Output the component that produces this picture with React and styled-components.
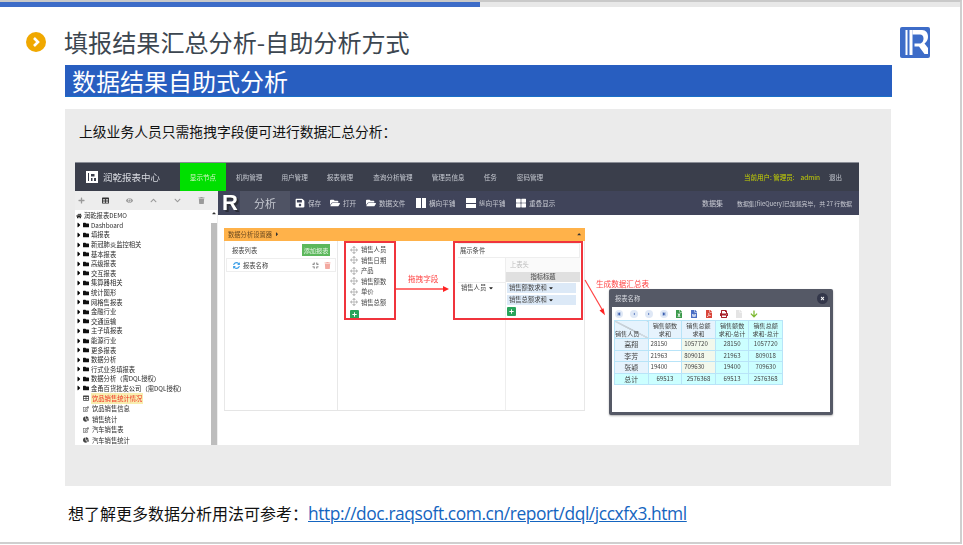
import React from "react";
import styled, { createGlobalStyle } from "styled-components";
import {
  FaCaretRight, FaCaretDown, FaCaretUp, FaFolder, FaFolderOpen, FaSave, FaHome, FaChartPie,
  FaPlus, FaEye, FaTrash, FaChevronUp, FaChevronDown, FaArrowsAlt, FaRegEdit, FaTable,
  FaSyncAlt, FaCompress, FaTimes, FaArrowDown, FaFileExcel, FaFileWord, FaFilePdf, FaPrint, FaFile,
  FaStepBackward, FaCaretLeft, FaStepForward, FaThLarge,
} from "react-icons/fa";

const CJK = `"Noto Sans CJK SC", "Liberation Sans", sans-serif`;

const navItems = [
  ["机构管理", 19.5], ["用户管理", 19], ["报表管理", 19], ["查询分析管理", 20],
  ["管理员信息", 19], ["任务", 19], ["密码管理", 20],
];

const treeFolders = [
  "Dashboard", "填报表", "新冠肺炎监控相关", "基本报表", "高级报表", "交互报表", "集算器相关",
  "统计图形", "网格售报表", "金融行业", "交通运输", "主子填报表", "能源行业", "更多报表",
  "数据分析", "行式业务填报表", "数据分析（需DQL授权）", "金甬百货批发公司（需DQL授权）",
];

const treeLeaves = [
  [FaTable, "饮品销售统计情况", true],
  [FaRegEdit, "饮品销售信息", false],
  [FaChartPie, "销售统计", false],
  [FaRegEdit, "汽车销售表", false],
  [FaChartPie, "汽车销售统计", false],
];

const fields = ["销售人员", "销售日期", "产品", "销售额数", "单价", "销售总额"];

const tableRows = [
  ["高翔", "28150", "1057720", "28150", "1057720"],
  ["李芳", "21963", "809018", "21963", "809018"],
  ["张颖", "19400", "709630", "19400", "709630"],
];

export default function App() {
  return (
    <>
      <GlobalStyle />
      <Slide>
        <Progress>
          <ProgressFill />
        </Progress>
        <Header>
          <Bullet>
            <svg width="10" height="10" viewBox="0 0 10 10">
              <path d="M3 1l4 4-4 4" fill="none" stroke="#fff" strokeWidth="2.6" />
            </svg>
          </Bullet>
          <Title>填报结果汇总分析-自助分析方式</Title>
          <BrandLogo />
        </Header>
        <Banner>数据结果自助式分析</Banner>
        <GrayPanel>
          <Lead>上级业务人员只需拖拽字段便可进行数据汇总分析：</Lead>
          <AppShot>
            <TopBar>
              <Brand>
                <MiniLogo />
                润乾报表中心
              </Brand>
              <GreenTab>显示节点</GreenTab>
              {navItems.map(([label, gap]) => (
                <NavItem key={label} $gap={gap}>{label}</NavItem>
              ))}
              <UserInfo>
                <span>当前用户: 管理员:</span>
                <span>admin</span>
                <Logout>退出</Logout>
              </UserInfo>
            </TopBar>
            <AppBody>
              <Sidebar>
                <SideTools>
                  <FaPlus />
                  <FaTable />
                  <FaEye />
                  <FaChevronUp />
                  <FaChevronDown />
                  <FaTrash />
                </SideTools>
                <Tree>
                  <TreeRoot><FaHome />润乾报表DEMO</TreeRoot>
                  {treeFolders.map((name) => (
                    <TreeRow key={name}>
                      <FaCaretRight />
                      <FaFolder />
                      <span>{name}</span>
                    </TreeRow>
                  ))}
                  {treeLeaves.map(([Icon, name, active]) => (
                    <LeafRow key={name}>
                      <Icon />
                      <LeafLabel $active={active}>{name}</LeafLabel>
                    </LeafRow>
                  ))}
                </Tree>
                <Scrollbar><FaCaretUp /></Scrollbar>
              </Sidebar>
              <Workspace>
                <ToolBar>
                  <RMark>R</RMark>
                  <ToolTitle>分析</ToolTitle>
                  <Tool $w={35}><FaSave />保存</Tool>
                  <Tool $w={36}><FaFolderOpen />打开</Tool>
                  <Tool $w={50}><FaFolderOpen />数据文件</Tool>
                  <Tool $w={50}><Split />横向平铺</Tool>
                  <Tool $w={50}><Split $rows />纵向平铺</Tool>
                  <Tool $w={50}><FaThLarge />重叠显示</Tool>
                  <ToolRight>
                    <DatasetLabel>数据集</DatasetLabel>
                    <span>数据集[fileQuery]已加载完毕，共 27 行数据</span>
                  </ToolRight>
                </ToolBar>
                <Canvas>
                  <Panel>
                    <PanelHead>
                      <span>数据分析设置器</span>
                      <FaCaretRight />
                      <CollapseCaret><FaCaretUp /></CollapseCaret>
                    </PanelHead>
                    <PanelBody>
                      <ReportColumn>
                        <ReportHead>
                          <span>报表列表</span>
                          <AddButton>添加报表</AddButton>
                        </ReportHead>
                        <ReportRow>
                          <FaSyncAlt color="#3ea0e8" />
                          <span>报表名称</span>
                          <ReportIcons>
                            <FaCompress color="#666" />
                            <FaTrash color="#f3a9a0" />
                          </ReportIcons>
                        </ReportRow>
                      </ReportColumn>
                      <FieldColumn>
                        {fields.map((f) => (
                          <FieldRow key={f}>
                            <FaArrowsAlt />
                            {f}
                          </FieldRow>
                        ))}
                        <PlusButton><FaPlus /></PlusButton>
                      </FieldColumn>
                      <ConditionColumn>
                        <CondHead>展示条件</CondHead>
                        <CondGrid>
                          <CondCell />
                          <CondHeader>上表头</CondHeader>
                          <CondCell />
                          <CondMetric>指标标题</CondMetric>
                          <CondRowField>销售人员 <FaCaretDown /></CondRowField>
                          <CondValues>
                            <Chip>销售额数求和 <FaCaretDown /></Chip>
                            <Chip>销售总额求和 <FaCaretDown /></Chip>
                            <PlusButton><FaPlus /></PlusButton>
                          </CondValues>
                        </CondGrid>
                      </ConditionColumn>
                    </PanelBody>
                  </Panel>

                  <Callout $x={190} $y={59}>拖拽字段</Callout>
                  <Callout $x={378} $y={64}>生成数据汇总表</Callout>
                  <Arrows width="641" height="230" viewBox="0 0 641 230">
                    <path d="M178 74L226 74" stroke="#f44" strokeWidth="1.4" fill="none" />
                    <path d="M225 71l6 3-6 3z" fill="#f22" />
                    <path d="M367 65L385 96" stroke="#f44" strokeWidth="1.2" fill="none" />
                    <path d="M381.500 95.500l4-2.300 1.500 7z" fill="#f22" />
                  </Arrows>
                  <RedFrame $x={126} $w={52} />
                  <RedFrame $x={235} $w={130} />

                  <Modal>
                    <ModalHead>
                      报表名称
                      <CloseBtn><FaTimes /></CloseBtn>
                    </ModalHead>
                    <ModalInner>
                      <ModalTools>
                        <Pager><FaStepBackward /></Pager>
                        <Pager><FaCaretLeft /></Pager>
                        <Pager><FaCaretRight /></Pager>
                        <Pager><FaStepForward /></Pager>
                        <FaFileExcel color="#3c9a4b" />
                        <FaFileWord color="#4a6fc4" />
                        <FaFilePdf color="#d9453a" />
                        <FaPrint color="#a8222a" />
                        <FaFile color="#e4e4e4" />
                        <FaArrowDown color="#7cb82f" />
                      </ModalTools>
                      <ReportTable>
                        <thead>
                          <tr>
                            <CornerCell>销售人员</CornerCell>
                            <HeadCell>销售额数<br />求和</HeadCell>
                            <HeadCell>销售总额<br />求和</HeadCell>
                            <TotalHead>销售额数<br />求和-总计</TotalHead>
                            <TotalHead>销售总额<br />求和-总计</TotalHead>
                          </tr>
                        </thead>
                        <tbody>
                          {tableRows.map(([name, a, b, c, d]) => (
                            <tr key={name}>
                              <NameCell>{name}</NameCell>
                              <DataCell>{a}</DataCell>
                              <DataCell $tint>{b}</DataCell>
                              <TotalCell>{c}</TotalCell>
                              <TotalCell>{d}</TotalCell>
                            </tr>
                          ))}
                          <tr>
                            <GrandName>总计</GrandName>
                            <TotalCell>69513</TotalCell>
                            <TotalCell>2576368</TotalCell>
                            <TotalCell>69513</TotalCell>
                            <TotalCell>2576368</TotalCell>
                          </tr>
                        </tbody>
                      </ReportTable>
                    </ModalInner>
                  </Modal>
                </Canvas>
              </Workspace>
            </AppBody>
          </AppShot>
        </GrayPanel>
        <Footer>
          想了解更多数据分析用法可参考：
          <DocLink href="#">http://doc.raqsoft.com.cn/report/dql/jccxfx3.html</DocLink>
        </Footer>
      </Slide>
    </>
  );
}

function BrandLogo() {
  return (
    <svg width="30" height="31" viewBox="0 0 30 31" style={{ flex: "none" }}>
      <rect width="30" height="31" rx="2" fill="#3d6cc8" />
      <path d="M5.500 3H7.500V28H5.500zM9.500 3H12.500V28H9.500z" fill="#fff" />
      <path d="M12.500 3H22C26 3 28 6 28 10C28 13 26.500 15 24.500 16.500L28 21V27H24.500L19 19.500H14.500V16.500H20C22 16.500 23.500 14 23.500 11.500C23.500 9 22 7.500 20 7.500H12.500z" fill="#fff" />
    </svg>
  );
}

function MiniLogo() {
  return (
    <svg width="12" height="12" viewBox="0 0 12 12" style={{ flex: "none" }}>
      <path d="M0 0h12v12H0z" fill="#fff" />
      <path d="M2 2h1v8H2zM5 3h3.500v2.500H5zM5 7h1.500v3H5zM8 7h2v3H8z" fill="#3a3e4b" />
    </svg>
  );
}

// Global
const GlobalStyle = createGlobalStyle`
  html, body {
    margin: 0;
    background: #fff;
  }
`;

const Slide = styled.div`
  box-sizing: border-box;
  width: 962px;
  height: 544px;
  border-top: 2px solid #c9c9c9;
  border-right: 2px solid #cfcfcf;
  border-bottom: 2px solid #cfcfcf;
  background: #fff;
  font-family: ${CJK};
  overflow: hidden;
`;

const Progress = styled.div`
  height: 5px;
  background: #e8e8e8;
`;

const ProgressFill = styled.div`
  width: 480px;
  height: 100%;
  background: #3d6cc8;
`;

const Header = styled.div`
  display: flex;
  align-items: center;
  height: 32px;
  margin-top: 19px;
  padding: 0 30px 0 26px;
`;

const Bullet = styled.div`
  display: flex;
  align-items: center;
  justify-content: center;
  width: 20px;
  height: 20px;
  border-radius: 50%;
  background: #f0a800;
`;

const Title = styled.h1`
  flex: 1;
  margin: 0 0 0 18px;
  color: #3c4650;
  font-size: 24.100px;
  font-weight: 400;
  line-height: 32px;
`;

const Banner = styled.div`
  width: 827px;
  height: 32px;
  margin: 7px 0 0 65px;
  padding-left: 7px;
  box-sizing: border-box;
  background: #285ec0;
  border-bottom: 1px solid #1a70c8;
  color: #fff;
  font-size: 24px;
  line-height: 31px;
`;

const GrayPanel = styled.div`
  box-sizing: border-box;
  width: 826px;
  height: 377px;
  margin: 12px 0 0 65px;
  padding: 12px 0 0 10px;
  background: #ebebeb;
`;

const Lead = styled.p`
  height: 20px;
  margin: 0 0 21px 4px;
  color: #111;
  font-size: 13.800px;
  line-height: 20px;
`;

const Footer = styled.div`
  display: flex;
  align-items: center;
  height: 24px;
  margin: 15px 0 0 68px;
  color: #111;
  font-size: 16px;
`;

const DocLink = styled.a`
  color: #1565c0;
  font-family: "Open Sans", sans-serif;
  font-size: 17.400px;
  letter-spacing: -0.42px;
`;

// Embedded screenshot of the report app
const AppShot = styled.div`
  display: flex;
  flex-direction: column;
  width: 784px;
  height: 283px;
  background: #fff;
  filter: blur(0.35px);
  overflow: hidden;
`;

const TopBar = styled.div`
  display: flex;
  align-items: center;
  flex: none;
  height: 29px;
  border-top: 1px solid #8a8d96;
  box-sizing: border-box;
  background: #3a3e4b;
  color: #c5c8d0;
  font-size: 6.600px;
`;

const Brand = styled.div`
  display: flex;
  align-items: center;
  gap: 5px;
  width: 105px;
  height: 100%;
  padding-left: 11px;
  box-sizing: border-box;
  color: #d8dae0;
  font-size: 9.500px;
`;

const GreenTab = styled.div`
  display: flex;
  align-items: center;
  justify-content: center;
  width: 46px;
  height: 100%;
  background: #00e000;
  color: #d8f5c8;
`;

const NavItem = styled.span`
  margin-left: ${(p) => p.$gap}px;
  white-space: nowrap;
  &:first-of-type {
    margin-left: 10px;
  }
`;

const UserInfo = styled.div`
  display: flex;
  align-items: center;
  gap: 6px;
  margin-left: auto;
  padding-right: 17px;
  color: #c8d400;
  font-size: 6.500px;
`;

const Logout = styled.span`
  margin-left: 3px;
  color: #c5c8d0;
`;

const AppBody = styled.div`
  display: flex;
  flex: 1;
  min-height: 0;
`;

const Sidebar = styled.div`
  position: relative;
  width: 143px;
  flex: none;
  border-right: 1px solid #eee;
  box-sizing: border-box;
`;

const SideTools = styled.div`
  display: flex;
  align-items: center;
  justify-content: space-between;
  height: 19px;
  padding: 0 12px 0 3px;
  background: #ededed;
  color: #9a9a9a;
  font-size: 7px;
  svg:nth-child(2) {
    color: #333;
  }
`;

const Tree = styled.div`
  padding: 0 0 0 1px;
  color: #2a2a2a;
  font-size: 6.300px;
`;

const TreeRoot = styled.div`
  display: flex;
  align-items: center;
  gap: 2px;
  height: 9.600px;
  margin-top: 1px;
  svg {
    font-size: 6px;
    color: #222;
  }
`;

const TreeRow = styled.div`
  display: flex;
  align-items: center;
  gap: 2px;
  height: 9.600px;
  margin-left: -1px;
  white-space: nowrap;
  svg {
    font-size: 6px;
    color: #111;
  }
  svg:first-child {
    font-size: 8px;
    color: #000;
    margin-right: -2px;
  }
`;

const LeafRow = styled.div`
  display: flex;
  align-items: center;
  gap: 2px;
  height: 10.400px;
  padding-left: 7px;
  white-space: nowrap;
  svg {
    font-size: 6px;
    color: #444;
  }
`;

const LeafLabel = styled.span`
  padding: 1px 1px;
  background: ${(p) => (p.$active ? "#f8eeb0" : "transparent")};
  color: ${(p) => (p.$active ? "#f03020" : "inherit")};
`;

const Scrollbar = styled.div`
  position: absolute;
  top: 19px;
  right: 0;
  bottom: 0;
  width: 6px;
  background: linear-gradient(#fff 13px, #bdbdbd 13px);
  color: #333;
  font-size: 6px;
  line-height: 8px;
  text-align: center;
`;

const Workspace = styled.div`
  display: flex;
  flex: 1;
  flex-direction: column;
  min-width: 0;
`;

const ToolBar = styled.div`
  display: flex;
  align-items: center;
  flex: none;
  height: 24px;
  background: #40445a;
  color: #c8cad2;
  font-size: 6.600px;
`;

const RMark = styled.div`
  width: 22px;
  height: 100%;
  padding-left: 4px;
  box-sizing: border-box;
  color: #fff;
  font-family: "Liberation Sans", sans-serif;
  font-size: 22px;
  font-weight: 700;
  line-height: 24px;
  text-shadow: 2px 2px 0 #2c2e38;
`;

const ToolTitle = styled.div`
  display: flex;
  align-items: center;
  justify-content: center;
  width: 50px;
  height: 100%;
  margin-right: 5px;
  background: #4f5364;
  color: #c5c8d0;
  font-size: 11px;
`;

const Tool = styled.div`
  display: flex;
  align-items: center;
  gap: 3px;
  width: ${(p) => p.$w}px;
  flex: none;
  white-space: nowrap;
  > svg {
    flex: none;
    width: 10px;
    height: 10px;
    color: #fff;
  }
`;

const Split = styled.i`
  display: flex;
  flex: none;
  flex-direction: ${(p) => (p.$rows ? "column" : "row")};
  gap: 1px;
  width: 10px;
  height: 10px;
  &::before,
  &::after {
    content: "";
    flex: 1;
    background: #fff;
  }
`;

const ToolRight = styled.div`
  display: flex;
  align-items: center;
  gap: 14px;
  margin-left: auto;
  padding-right: 7px;
  font-size: 5.900px;
`;

const DatasetLabel = styled.span`
  font-size: 7px;
`;

const Canvas = styled.div`
  position: relative;
  flex: 1;
  padding: 13px 0 0 6px;
`;

const Panel = styled.div`
  display: flex;
  flex-direction: column;
  width: 361px;
  height: 183px;
  border-bottom: 1px solid #e5e5e5;
  box-sizing: border-box;
  color: #444;
  font-size: 6.300px;
`;

const PanelHead = styled.div`
  display: flex;
  align-items: center;
  gap: 2px;
  height: 13px;
  flex: none;
  padding-left: 4px;
  background: #ffb24a;
  color: #6b4a20;
  svg {
    color: #333;
  }
`;

const CollapseCaret = styled.span`
  display: flex;
  margin-left: auto;
  padding-right: 3px;
`;

const PanelBody = styled.div`
  display: flex;
  flex: 1;
  border-left: 1px solid #e8e8e8;
  border-right: 1px solid #e8e8e8;
`;

const ReportColumn = styled.div`
  width: 113px;
  flex: none;
  border-right: 1px solid #e8e8e8;
  box-sizing: border-box;
  padding: 3px 1px 0;
`;

const ReportHead = styled.div`
  display: flex;
  align-items: center;
  justify-content: space-between;
  height: 12px;
  padding: 0 6px;
  margin-bottom: 2px;
`;

const AddButton = styled.span`
  display: flex;
  align-items: center;
  justify-content: center;
  width: 28px;
  height: 12px;
  background: #5cb85c;
  color: #e6f5e6;
  font-size: 6.200px;
`;

const ReportRow = styled.div`
  display: flex;
  align-items: center;
  gap: 3px;
  height: 14px;
  padding: 0 4px 0 6px;
  border: 1px solid #eee;
  box-sizing: border-box;
  svg {
    font-size: 7px;
  }
`;

const ReportIcons = styled.span`
  display: flex;
  gap: 5px;
  margin-left: auto;
`;

const FieldColumn = styled.div`
  display: flex;
  flex-direction: column;
  width: 52px;
  margin-left: 7px;
  padding: 3.500px 0 0 5px;
  box-sizing: border-box;
  flex: none;
`;

const FieldRow = styled.div`
  display: flex;
  align-items: center;
  gap: 3px;
  height: 10.500px;
  svg {
    font-size: 8px;
    color: #bbb;
  }
`;

const PlusButton = styled.span`
  display: flex;
  align-items: center;
  justify-content: center;
  width: 9px;
  height: 9px;
  margin-top: 2px;
  border-radius: 1px;
  background: #27a45a;
  color: #fff;
  font-size: 5px;
`;

const ConditionColumn = styled.div`
  display: flex;
  flex-direction: column;
  width: 122px;
  margin: 2px 0 0 61px;
`;

const CondHead = styled.div`
  height: 13px;
  line-height: 13px;
  padding-left: 2px;
  border: 1px solid #eee;
  border-left: 0;
  flex: none;
`;

const CondGrid = styled.div`
  display: grid;
  flex: 1;
  grid-template-columns: 48px 74px;
  grid-template-rows: 14px 10px 1fr;
`;

const CondCell = styled.div`
  border-right: 1px solid #eee;
`;

const CondHeader = styled.div`
  padding-left: 4px;
  background: #fafafa;
  color: #bbb;
  line-height: 14px;
`;

const CondMetric = styled.div`
  background: #e0e0e0;
  text-align: center;
  line-height: 10px;
`;

const CondRowField = styled.div`
  padding: 0 0 0 3px;
  border-right: 1px solid #eee;
  border-top: 1px solid #eee;
  svg {
    font-size: 6px;
    color: #222;
    vertical-align: -1px;
  }
`;

const CondValues = styled.div`
  padding: 1px 4px 0 1px;
`;

const Chip = styled.div`
  height: 10px;
  margin-bottom: 2px;
  padding-left: 2px;
  background: #dce9f7;
  line-height: 10px;
  svg {
    font-size: 6px;
    color: #222;
    vertical-align: -1px;
  }
`;

const Callout = styled.span`
  position: absolute;
  left: ${(p) => p.$x}px;
  top: ${(p) => p.$y}px;
  color: #f44;
  font-size: 7.600px;
  line-height: 10px;
  white-space: nowrap;
`;

const Arrows = styled.svg`
  position: absolute;
  top: 0;
  left: 0;
  pointer-events: none;
`;

const RedFrame = styled.div`
  position: absolute;
  left: ${(p) => p.$x}px;
  top: 26px;
  width: ${(p) => p.$w}px;
  height: 79px;
  box-sizing: border-box;
  border: 2px solid #f0343c;
`;

const Modal = styled.div`
  position: absolute;
  left: 391px;
  top: 74px;
  display: flex;
  flex-direction: column;
  width: 224px;
  height: 126px;
  box-sizing: border-box;
  padding: 0 3px 3px;
  border-radius: 2px;
  background: #555966;
  box-shadow: 0 1px 2px rgba(0, 0, 0, 0.3);
`;

const ModalHead = styled.div`
  display: flex;
  align-items: center;
  justify-content: space-between;
  flex: none;
  height: 18px;
  padding: 0 2px 0 3px;
  color: #d8dae0;
  font-size: 6.300px;
`;

const CloseBtn = styled.span`
  display: flex;
  align-items: center;
  justify-content: center;
  width: 11px;
  height: 11px;
  border-radius: 50%;
  background: #33374a;
  color: #fff;
  font-size: 5px;
`;

const ModalInner = styled.div`
  flex: 1;
  padding-left: 2px;
  background: #fff;
`;

const ModalTools = styled.div`
  display: flex;
  align-items: center;
  gap: 7px;
  height: 13px;
  padding-left: 1px;
  svg {
    flex: none;
    width: 8px;
    height: 8px;
  }
`;

const Pager = styled.span`
  display: flex;
  flex: none;
  align-items: center;
  justify-content: center;
  width: 8px;
  height: 8px;
  border-radius: 50%;
  background: #dfe8f6;
  color: #3a5fb0;
  svg {
    width: 4px;
    height: 4px;
  }
`;

const ReportTable = styled.table`
  width: 169px;
  border-collapse: collapse;
  table-layout: fixed;
  color: #444;
  font-size: 6.100px;
  line-height: 8px;
  td, th {
    padding: 0;
    border: 1px solid #b8e4f8;
    font-weight: 400;
    height: 10.500px;
  }
`;

const CornerCell = styled.th`
  background: #e6f3fd linear-gradient(to top right, transparent 49%, #777 50%, transparent 52%);
  vertical-align: bottom;
  text-align: left;
  white-space: nowrap;
`;

const HeadCell = styled.th`
  background: #e6f3fd;
  height: 17px !important;
  text-align: center;
`;

const TotalHead = styled(HeadCell)`
  background: #ccffff;
`;

const NameCell = styled.td`
  background: #e6f3fd;
  text-align: center;
  font-size: 7px;
`;

const GrandName = styled(NameCell)`
  background: #ccffff;
`;

const DataCell = styled.td`
  padding-left: 2px !important;
  background: ${(p) => (p.$tint ? "#f2f8ec" : "#fff")};
`;

const TotalCell = styled.td`
  background: #ccffff;
  text-align: center;
`;
